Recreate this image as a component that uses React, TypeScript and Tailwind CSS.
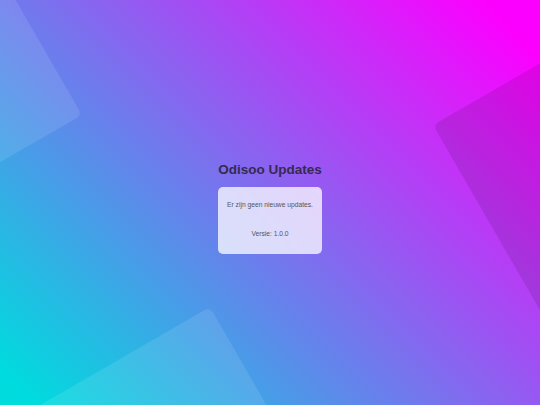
import React from "react"

export default function App() {
  return (
    <div
      className="relative h-screen w-full overflow-hidden bg-[linear-gradient(45deg,#00dbde_4%,#fc00ff_94%)]"
      style={{ fontFamily: '"Liberation Sans", Arial, sans-serif' }}
    >
      {/* decorative tilted squares */}
      <div className="absolute left-[-273px] top-[-90px] h-[300px] w-[300px] -rotate-30 rounded-md bg-white/10" />
      <div className="absolute left-[488px] top-[30px] h-[300px] w-[300px] -rotate-30 rounded-md bg-black/10" />
      <div className="absolute left-[5px] top-[362px] h-[300px] w-[300px] -rotate-30 rounded-md bg-white/10" />

      <div className="relative flex h-full flex-col items-center justify-center pt-[11px]">
        <h1 className="text-[13.5px] font-bold leading-[16px] text-[#352a50]">Odisoo Updates</h1>
        <div className="mt-[9px] flex w-[104px] flex-col items-center rounded-[5px] bg-white/75 pt-[13px] pb-[15px] text-[6.7px] leading-[10px] text-[#555]">
          <p>Er zijn geen nieuwe updates.</p>
          <p className="mt-[19px]">Versie: 1.0.0</p>
        </div>
      </div>
    </div>
  )
}
